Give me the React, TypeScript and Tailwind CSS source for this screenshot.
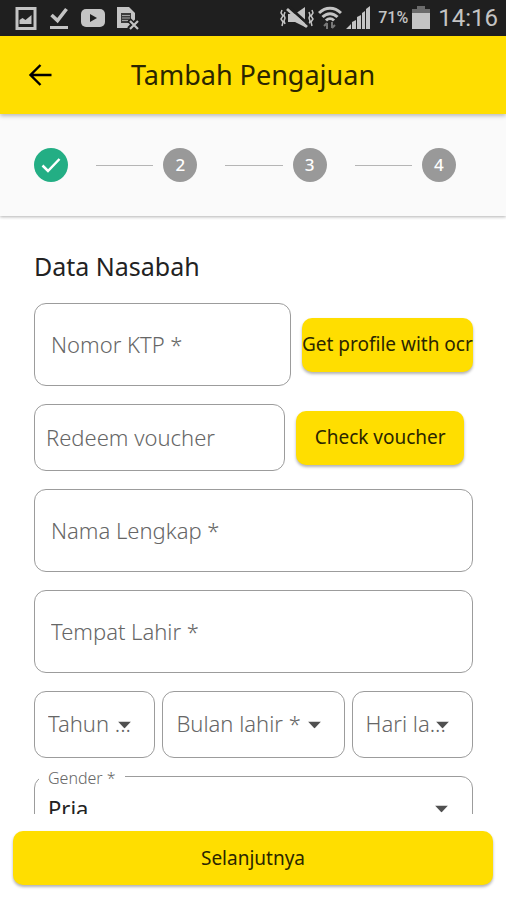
import { Fragment } from "react";
import clsx from "clsx";

const steps = [1, 2, 3, 4];

const BackIcon = () => (
  <svg width="24" height="24" viewBox="0 0 24 24" fill="none" stroke="currentColor" strokeWidth="2.4">
    <path d="M23.5 12H3M12.5 2 2.500 12l10 10" />
  </svg>
);

const CheckIcon = () => (
  <svg width="20" height="16" viewBox="0 0 20 16" fill="none" stroke="currentColor" strokeWidth="2.500">
    <path d="m1.500 8.500 5.500 5.500L18.500 2" />
  </svg>
);

const CaretIcon = () => (
  <svg
    className="pointer-events-none absolute top-1/2 right-6 -translate-y-1/2 text-[#505050]"
    width="13"
    height="7"
    viewBox="0 0 13 7"
    fill="currentColor"
  >
    <path d="M0 0h13L6.500 7z" />
  </svg>
);

const NotificationIcons = () => (
  <div className="flex items-center gap-3 text-[#c4c4c4]">
    <svg width="22" height="24" viewBox="0 0 22 24" fill="none" stroke="currentColor">
      <path d="M2 2.500h18v20H2z" strokeWidth="3" />
      <path d="M4.500 18v-4l3-2 3 2 6-5v9z" fill="currentColor" stroke="none" />
    </svg>
    <svg width="20" height="24" viewBox="0 0 20 24" fill="none" stroke="currentColor" strokeWidth="3.600">
      <path d="m2.500 9 6 5.500L17.500 3" />
      <path d="M1 21.500h18" strokeWidth="3" />
    </svg>
    <svg width="24" height="24" viewBox="0 0 24 24">
      <rect x="0" y="3" width="24" height="18" rx="5" fill="currentColor" />
      <path d="m9 8 7 4-7 4z" fill="#1f1f1f" />
    </svg>
    <svg width="24" height="24" viewBox="0 0 24 24">
      <path d="M0 1h12l6 6v15H0z" fill="currentColor" />
      <path d="M4 7h10v10H4z" fill="#3a3a3a" />
      <path d="M5 9.500h8M5 12h8M5 14.500h6" stroke="#a0a0a0" />
      <path d="m12 14 9 9M21 14l-9 9" stroke="#1f1f1f" strokeWidth="5" />
      <path d="m13 15 8 8M21 15l-8 8" stroke="currentColor" strokeWidth="2.200" />
    </svg>
  </div>
);

const SystemIcons = () => (
  <div className="flex items-center text-[#c4c4c4]">
    <svg width="34" height="24" viewBox="0 0 34 24" fill="none" stroke="currentColor">
      <path d="m2 4-1 3 2 3-2 3 2 3-1 4M5 6 4 9l1 3-1 3 1 3M32 4l1 3-2 3 2 3-2 3 1 4M29 6l1 3-1 3 1 3-1 3" strokeWidth="1.500" />
      <path d="M8 8h7l10-7v20l-10-5H8z" fill="currentColor" stroke="none" />
      <path d="M9 1 29 19" stroke="#1f1f1f" strokeWidth="3" />
      <path d="M7 3 27 21" strokeWidth="2.800" />
    </svg>
    <svg className="ml-1" width="24" height="24" viewBox="0 0 24 24" fill="none" stroke="currentColor" strokeWidth="3">
      <path d="M1 7c6.500-6.500 15.500-6.500 22 0M4.500 11c4.500-4.500 10.500-4.500 15 0M8 14.500c2.500-2.500 5.500-2.500 8 0" />
      <path d="M9 23v-6m-3 3 3-3M14 16v6m0 0 3-3" stroke="#777777" strokeWidth="2" />
    </svg>
    <svg className="ml-1" width="24" height="24" viewBox="0 0 24 24" fill="currentColor">
      <path d="M0 23h5v-5zM6 16l4-2v9H6zM11 11l4-2v14h-4zM16 7l3-2v18h-3zM20 3l4-3v23h-4z" />
    </svg>
    <span className="ml-2 text-base font-medium">71%</span>
    <svg className="ml-1" width="18" height="24" viewBox="0 0 18 24">
      <path d="M5 0h8v3h5v5H0V3h5z" fill="#6b6b6b" />
      <path d="M0 7h18v16H0z" fill="currentColor" />
    </svg>
    <span className="ml-2 text-2xl">14:16</span>
  </div>
);

interface FieldProps {
  label: string;
  className?: string;
}

const Field = ({ label, className }: FieldProps) => (
  <input
    type="text"
    aria-label={label}
    placeholder={label}
    className={clsx(
      "w-full min-w-0 rounded-xl border border-[#9c9c9c] bg-white pb-0.5 font-light placeholder:text-[#666666]",
      className,
    )}
  />
);

interface DateSelectProps {
  name: string;
  text: string;
}

const DateSelect = ({ name, text }: DateSelectProps) => (
  <div className="relative min-w-0">
    <select
      aria-label={name}
      className="h-[67px] w-full appearance-none rounded-xl border border-[#9c9c9c] bg-white pb-0.5 pl-[13px] font-light text-[#666666]"
    >
      <option>{text}</option>
    </select>
    <CaretIcon />
  </div>
);

interface ButtonProps {
  children: React.ReactNode;
}

const Button = ({ children }: ButtonProps) => (
  <button
    type="button"
    className="h-[54px] w-full min-w-0 cursor-pointer rounded-[10px] bg-[#ffde00] text-[19px] whitespace-nowrap text-[#2b2600] shadow-[0_2px_3px_rgba(0,0,0,0.3)]"
  >
    {children}
  </button>
);

const App = () => {
  return (
    <div className="flex h-screen flex-col bg-white font-['Noto_Sans',sans-serif] text-[22px] text-[#222222]">
      <div className="flex h-9 shrink-0 items-center justify-between bg-[#1f1f1f] pr-2 pl-[15px] font-['Roboto',sans-serif]">
        <NotificationIcons />
        <SystemIcons />
      </div>

      <header className="z-20 grid h-[78px] shrink-0 grid-cols-[1fr_auto_1fr] items-center bg-[#ffde00] px-7 shadow-[0_2px_4px_rgba(0,0,0,0.25)]">
        <button type="button" aria-label="Kembali" className="w-6 cursor-pointer text-black">
          <BackIcon />
        </button>
        <h1 className="text-[27px] text-[#2b2600]">Tambah Pengajuan</h1>
      </header>

      <div className="z-10 flex h-[102px] shrink-0 items-center bg-[#fafafa] pr-[50px] pl-[34px] shadow-[0_1px_3px_rgba(0,0,0,0.3)]">
        {steps.map((step) => (
          <Fragment key={step}>
            {step > 1 && <div className="mr-[10px] ml-7 h-px flex-1 bg-[#b5b5b5]" />}
            <div
              className={clsx(
                "flex size-[34px] items-center justify-center rounded-full text-[17px] font-medium text-white",
                step === 1 ? "bg-[#23ae84]" : "bg-[#999999]",
              )}
            >
              {step === 1 ? <CheckIcon /> : step}
            </div>
          </Fragment>
        ))}
      </div>

      <main className="min-h-0 flex-1 overflow-hidden pr-[33px] pl-[34px]">
        <h2 className="mt-8 mb-[19px] text-[25px] leading-9">Data Nasabah</h2>
        <form className="flex flex-col gap-[18px]">
          <div className="grid grid-cols-[3fr_2fr] items-center gap-[11px]">
            <Field label="Nomor KTP *" className="h-[83px] px-4" />
            <Button>Get profile with ocr</Button>
          </div>
          <div className="mr-[9px] grid grid-cols-[3fr_2fr] items-center gap-[11px]">
            <Field label="Redeem voucher" className="h-[67px] px-[11px]" />
            <Button>Check voucher</Button>
          </div>
          <Field label="Nama Lengkap *" className="h-[83px] px-4" />
          <Field label="Tempat Lahir *" className="h-[83px] px-4" />
          <div className="grid grid-cols-[2fr_3fr_2fr] gap-[7px]">
            <DateSelect name="Tahun lahir" text="Tahun ..." />
            <DateSelect name="Bulan lahir" text="Bulan lahir *" />
            <DateSelect name="Hari lahir" text="Hari la..." />
          </div>
          <fieldset className="-mt-3 h-24 rounded-xl border border-[#9c9c9c]">
            <legend className="ml-1 px-[9px] pt-1 text-base leading-5 font-light text-[#666666]">
              <label htmlFor="gender">Gender *</label>
            </legend>
            <div className="relative">
              <select id="gender" className="h-[42px] w-full appearance-none bg-transparent pb-0.5 pl-[13px]">
                <option>Pria</option>
                <option>Wanita</option>
              </select>
              <CaretIcon />
            </div>
          </fieldset>
        </form>
      </main>

      <footer className="shrink-0 px-[13px] pt-[17px] pb-[15px]">
        <Button>Selanjutnya</Button>
      </footer>
    </div>
  );
};

export default App;
